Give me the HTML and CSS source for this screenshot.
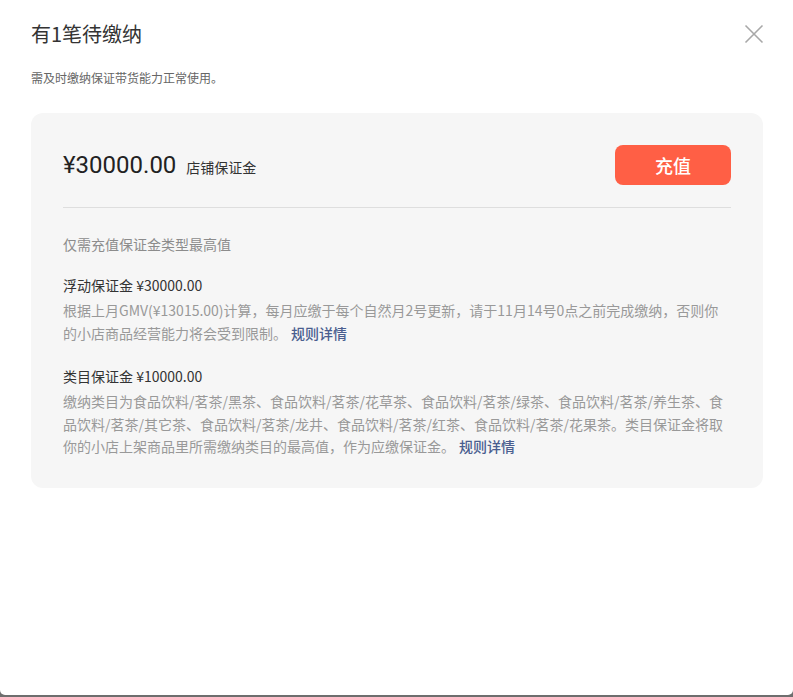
FILE: index.html
```html
<!DOCTYPE html>
<html lang="zh-CN">
<head>
<meta charset="utf-8">
<link rel="stylesheet" href="styles.css">
</head>
<body>
<div class="modal">
  <div class="header">
    <h1 class="title">有1笔待缴纳</h1>
    <button class="close" aria-label="关闭">
      <svg width="20" height="20" viewBox="0 0 20 20"><path d="M1.5 1.5 L18.5 18.5 M18.5 1.5 L1.5 18.5" stroke="#a8a8a8" stroke-width="1.6" fill="none"/></svg>
    </button>
  </div>
  <p class="subtitle">需及时缴纳保证带货能力正常使用。</p>
  <div class="card">
    <div class="summary">
      <div class="amount-wrap">
        <span class="amount">¥30000.00</span>
        <span class="amount-label">店铺保证金</span>
      </div>
      <button class="pay">充值</button>
    </div>
    <div class="divider"></div>
    <p class="note">仅需充值保证金类型最高值</p>
    <div class="item">
      <div class="item-title">浮动保证金 ¥30000.00</div>
      <p class="item-desc">根据上月GMV(¥13015.00)计算，每月应缴于每个自然月2号更新，请于11月14号0点之前完成缴纳，否则你的小店商品经营能力将会受到限制。<a class="link">规则详情</a></p>
    </div>
    <div class="item">
      <div class="item-title">类目保证金 ¥10000.00</div>
      <p class="item-desc">缴纳类目为食品饮料/茗茶/黑茶、食品饮料/茗茶/花草茶、食品饮料/茗茶/绿茶、食品饮料/茗茶/养生茶、食品饮料/茗茶/其它茶、食品饮料/茗茶/龙井、食品饮料/茗茶/红茶、食品饮料/茗茶/花果茶。类目保证金将取你的小店上架商品里所需缴纳类目的最高值，作为应缴保证金。<a class="link">规则详情</a></p>
    </div>
  </div>
</div>
</body>
</html>
```

FILE: styles.css
```css
* { box-sizing: border-box; }
html, body { margin: 0; padding: 0; }
body {
  background: #6e6e6e;
  font-family: "Noto Sans CJK SC", "Noto Sans", sans-serif;
  width: 793px;
  height: 697px;
  overflow: hidden;
}
.modal {
  background: #fff;
  height: 695px;
  border-radius: 0 0 5px 5px;
  padding: 20px 30px 0 31px;
}
.header {
  display: flex;
  justify-content: space-between;
  align-items: center;
  height: 28px;
}
.title {
  margin: 0;
  font-size: 20px;
  font-weight: 400;
  color: #333;
  line-height: 28px;
}
.close {
  border: 0;
  background: none;
  padding: 0;
  margin-right: -1px;
  width: 20px;
  height: 20px;
  display: flex;
}
.subtitle {
  margin: 21px 0 0;
  font-size: 12px;
  line-height: 18px;
  color: #666;
}
.card {
  margin-top: 26px;
  background: #f6f6f6;
  border-radius: 12px;
  padding: 32px 32px 30px 32px;
}
.summary {
  display: flex;
  justify-content: space-between;
  align-items: center;
  height: 40px;
}
.amount-wrap {
  display: flex;
  align-items: baseline;
  gap: 10px;
}
.amount {
  font-family: "Roboto", "Noto Sans", sans-serif;
  font-size: 24px;
  color: #222;
  letter-spacing: 0;
}
.amount-label {
  font-size: 14px;
  color: #333;
}
.pay {
  width: 116px;
  height: 40px;
  border: 0;
  border-radius: 8px;
  background: #ff5f45;
  color: #fff;
  font-family: "Noto Sans CJK SC", sans-serif;
  font-size: 18px;
  font-weight: 500;
}
.divider {
  height: 1px;
  background: #dedede;
  margin-top: 22px;
}
.note {
  margin: 25px 0 0;
  font-size: 14px;
  line-height: 22px;
  color: #8c8c8c;
}
.item { margin-top: 19px; }
.item + .item { margin-top: 21px; }
.item-title {
  font-size: 14px;
  line-height: 22px;
  color: #333;
}
.item-desc {
  margin: 3px 0 0;
  font-size: 14px;
  line-height: 22.5px;
  color: #999;
}
.link {
  display: inline-block;
  margin-left: 4px;
  color: #4a5e8f;
  font-weight: 500;
}
```
